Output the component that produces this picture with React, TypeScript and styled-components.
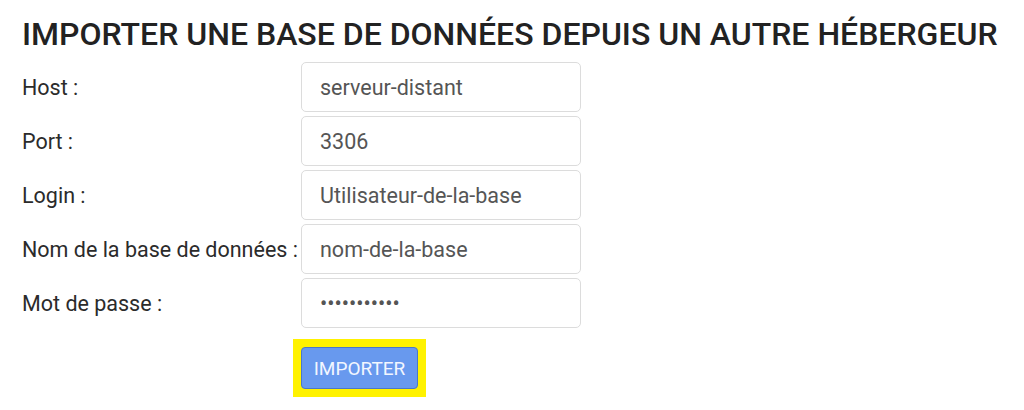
import React from "react";
import styled, { createGlobalStyle } from "styled-components";

const Global = createGlobalStyle`
  html, body { margin: 0; padding: 0; background: #ffffff; }
  body { font-family: Roboto, "Liberation Sans", Arial, sans-serif; }
`;

const Page = styled.div`
  padding: 14px 0 0 22px;
  width: 1024px;
  height: 410px;
  box-sizing: border-box;
  overflow: hidden;
`;

const Title = styled.h1`
  margin: 0 0 8px 0;
  font-family: Roboto, "Liberation Sans", Arial, sans-serif;
  font-size: 32px;
  font-weight: 500;
  line-height: 40px;
  color: #222222;
  white-space: nowrap;
`;

const Form = styled.form`
  display: grid;
  grid-template-columns: 279px 280px;
  row-gap: 4px;
  align-items: center;
`;

const Label = styled.label`
  font-size: 21.5px;
  color: #2b2b2b;
  white-space: nowrap;
`;

const Input = styled.input`
  box-sizing: border-box;
  width: 280px;
  height: 50px;
  padding: 0 18px;
  border: 1px solid #dcdcdc;
  border-radius: 5px;
  font-family: Roboto, "Liberation Sans", Arial, sans-serif;
  font-size: 21.5px;
  color: #555555;
  background: #fff;
  outline: none;
`;

const ButtonCell = styled.div`
  grid-column: 2;
  margin-top: 7px;
  margin-left: -8px;
`;

const Highlight = styled.div`
  display: inline-block;
  background: #fff200;
  padding: 8px;
`;

const Button = styled.button`
  display: block;
  width: 117px;
  height: 42px;
  background: #6899ee;
  border: 1px solid #4a78c9;
  border-radius: 4px;
  color: #f2f6ff;
  font-family: Roboto, "Liberation Sans", Arial, sans-serif;
  font-size: 19px;
  text-transform: uppercase;
  padding: 0;
  cursor: pointer;
`;

const fields: { label: string; value: string; type: string }[] = [
  { label: "Host :", value: "serveur-distant", type: "text" },
  { label: "Port :", value: "3306", type: "text" },
  { label: "Login :", value: "Utilisateur-de-la-base", type: "text" },
  { label: "Nom de la base de données :", value: "nom-de-la-base", type: "text" },
  { label: "Mot de passe :", value: "motdepasse1", type: "password" },
];

export default function App() {
  return (
    <>
      <Global />
      <Page>
        <Title>IMPORTER UNE BASE DE DONNÉES DEPUIS UN AUTRE HÉBERGEUR</Title>
        <Form onSubmit={(e) => e.preventDefault()}>
          {fields.map((f) => (
            <React.Fragment key={f.label}>
              <Label>{f.label}</Label>
              <Input type={f.type} defaultValue={f.value} readOnly />
            </React.Fragment>
          ))}
          <ButtonCell>
            <Highlight>
              <Button type="submit">Importer</Button>
            </Highlight>
          </ButtonCell>
        </Form>
      </Page>
    </>
  );
}
